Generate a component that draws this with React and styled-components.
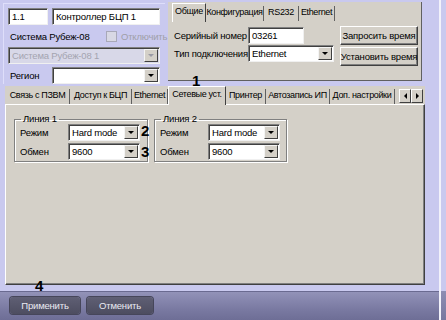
import React from 'react';
import styled, { createGlobalStyle } from 'styled-components';

const Global = createGlobalStyle`
  html, body { margin: 0; padding: 0; background: #c9c9ef; }
  body { font-family: "Liberation Sans", Arial, sans-serif; font-size: 9.5px; letter-spacing: -0.2px; color: #000; }
  * { box-sizing: border-box; }
`;

const Screen = styled.div`
  position: relative;
  width: 446px;
  height: 320px;
  overflow: hidden;
  display: flex;
  background: #c9c9ef;
`;

const MainCol = styled.div`
  width: 439px;
  display: grid;
  grid-template-rows: 86px 199px 6px 29px;
`;

const Edge = styled.div`
  flex: 1;
  border-left: 2px solid #f2f2fa;
  background: linear-gradient(to bottom, #c9c9ef 0 291px, #8d8db3 291px, #77779f 320px);
`;

const Top = styled.div`
  display: flex;
  align-items: flex-start;
  gap: 3px;
  padding: 2px 0 0 3px;
`;

const LeftPanel = styled.div`
  width: 162px;
  height: 81px;
  margin-top: 1px;
  border-top: 1px solid #dedefa;
  border-left: 1px solid #dedefa;
  padding: 4px 4px 0 4px;
  display: flex;
  flex-direction: column;
  gap: 3px;
`;

const Row = styled.div`
  display: flex;
  align-items: center;
  gap: ${p => p.$gap ?? 4}px;
  height: ${p => p.$h ?? 17}px;
`;

const Label = styled.span`
  width: ${p => (p.$w ? p.$w + 'px' : 'auto')};
  color: ${p => (p.$disabled ? '#a0a0a8' : '#000')};
  padding-left: ${p => p.$pl ?? 0}px;
  white-space: nowrap;
  flex-shrink: 0;
`;

const Input = styled.div`
  width: ${p => p.$w}px;
  height: 17px;
  background: #fff;
  border-top: 1px solid #808080;
  border-left: 1px solid #808080;
  border-right: 1px solid #f0f0f0;
  border-bottom: 1px solid #f0f0f0;
  box-shadow: inset 1px 1px 0 #404040;
  padding: 2px 3px 0;
  white-space: nowrap;
  overflow: hidden;
`;

const SelectBox = styled.div`
  width: ${p => p.$w}px;
  height: 17px;
  display: flex;
  background: ${p => (p.$disabled ? '#d8d8e8' : '#fff')};
  border-top: 1px solid #808080;
  border-left: 1px solid #808080;
  border-right: 1px solid #f0f0f0;
  border-bottom: 1px solid #f0f0f0;
  box-shadow: inset 1px 1px 0 #404040;
  color: ${p => (p.$disabled ? '#a4a4b0' : '#000')};
`;

const SelectText = styled.span`
  flex: 1;
  padding: 2px 3px 0;
  white-space: nowrap;
  overflow: hidden;
`;

const ArrowBtn = styled.span`
  width: 14px;
  height: 13px;
  margin: 1px 1px 0 0;
  background: #d4d0c8;
  border-top: 1px solid #f4f4f4;
  border-left: 1px solid #f4f4f4;
  border-right: 1px solid #404040;
  border-bottom: 1px solid #404040;
  display: flex;
  align-items: center;
  justify-content: center;
  &::after {
    content: '';
    border-left: 3px solid transparent;
    border-right: 3px solid transparent;
    border-top: 3px solid ${p => (p.$disabled ? '#9a9aa4' : '#000')};
  }
`;

function Select({ w, value, disabled }) {
  return (
    <SelectBox $w={w} $disabled={disabled}>
      <SelectText>{value}</SelectText>
      <ArrowBtn $disabled={disabled} />
    </SelectBox>
  );
}

const Check = styled.span`
  width: 11px;
  height: 11px;
  background: #d8d8e4;
  border: 1px solid #a8a8b8;
  flex-shrink: 0;
`;

const Panel = styled.div`
  width: 254px;
  height: 79px;
  background: #d4d0c8;
  border-right: 1px solid #606060;
  border-bottom: 1px solid #606060;
  padding: 2px 4px 0 4px;
  display: flex;
  flex-direction: column;
`;

const TabStrip = styled.div`
  display: flex;
  align-items: flex-end;
  height: 17px;
`;

const Tab = styled.div`
  width: ${p => p.$w}px;
  flex-shrink: 0;
  height: 15px;
  padding-top: 1px;
  font-size: 9px;
  letter-spacing: -0.35px;
  text-align: center;
  white-space: nowrap;
  background: #d4d0c8;
  border-right: 1px solid #606060;
  ${p => p.$active && `
    padding-top: 2px;
    border-top: 1px solid #fff;
    border-left: 1px solid #fff;
    border-right: 1px solid #404040;
    position: relative;
    z-index: 1;
    margin-bottom: -1px;
    height: 19px;
  `}
`;

const ScrollArrows = styled.div`
  display: flex;
  margin-left: auto;
  margin-bottom: 1px;
`;

const ScrollBtn = styled.span`
  width: 12px;
  height: 14px;
  background: #d4d0c8;
  border-top: 1px solid #fff;
  border-left: 1px solid #fff;
  border-right: 1px solid #404040;
  border-bottom: 1px solid #404040;
  display: flex;
  align-items: center;
  justify-content: center;
  &::after {
    content: '';
    border-top: 3px solid transparent;
    border-bottom: 3px solid transparent;
    ${p => (p.$dir === 'left' ? 'border-right: 3px solid #000;' : 'border-left: 3px solid #000;')}
  }
`;

const PanelBody = styled.div`
  display: grid;
  grid-template-columns: 1fr 78px;
  column-gap: 6px;
  padding: 4px 0 0 2px;
`;

const FieldCol = styled.div`
  display: flex;
  flex-direction: column;
  gap: 1px;
  padding-top: 2px;
`;

const BtnCol = styled.div`
  display: flex;
  flex-direction: column;
  gap: 2px;
  padding-top: 1px;
`;

const WinButton = styled.div`
  height: 19px;
  background: #d4d0c8;
  border-top: 1px solid #fff;
  border-left: 1px solid #fff;
  border-right: 1px solid #404040;
  border-bottom: 1px solid #404040;
  box-shadow: inset -1px -1px 0 #808080;
  display: flex;
  align-items: center;
  justify-content: center;
  white-space: nowrap;
`;

const Tabs = styled.div`
  margin-left: 5px;
  width: 420px;
  display: flex;
  flex-direction: column;
`;

const TabsHead = styled.div`
  background: #d4d0c8;
  height: 18px;
  display: flex;
  align-items: flex-end;
  padding: 0 2px 0 1px;
`;

const TabsBody = styled.div`
  flex: 1;
  background: #d4d0c8;
  border-top: 1px solid #fff;
  border-left: 1px solid #fff;
  border-right: 1px solid #404040;
  border-bottom: 1px solid #404040;
  box-shadow: inset -1px -1px 0 #808080;
  display: flex;
  align-items: flex-start;
  gap: 1px;
  padding: 9px 0 0 8px;
`;

const Group = styled.fieldset`
  margin: 0;
  width: ${p => p.$w}px;
  height: 48px;
  border: 1px solid #808080;
  box-shadow: 1px 1px 0 #fff, inset 1px 1px 0 #fff;
  padding: 0 6px 0 5px;
  display: flex;
  flex-direction: column;
  gap: 2px;
  & > legend {
    padding: 0 2px;
    margin-left: 1px;
    line-height: 10px;
  }
`;

const GroupRow = styled.div`
  display: flex;
  align-items: center;
  height: 17px;
`;

const Marks = styled.div`
  display: flex;
  flex-direction: column;
  gap: 2px;
  padding-top: 7px;
  margin-left: -8px;
  margin-right: 2px;
  position: relative;
  z-index: 1;
`;

const Mark = styled.span`
  font-weight: bold;
  font-size: 15px;
  letter-spacing: 0;
  line-height: 19px;
  height: 19px;
  width: 10px;
`;

const FloatMark = styled.span`
  position: absolute;
  left: ${p => p.$x}px;
  top: ${p => p.$y}px;
  font-weight: bold;
  font-size: 15px;
  line-height: 14px;
`;

const Bar = styled.div`
  grid-row: 4;
  background: linear-gradient(to bottom, #9292b8, #7a7aa2 60%, #6e6e96);
  border-top: 1px solid #6a6a90;
  display: flex;
  align-items: center;
  gap: 7px;
  padding: 0 0 2px 10px;
`;

const BarButton = styled.div`
  width: ${p => p.$w}px;
  height: 17px;
  border-radius: 3px;
  background: linear-gradient(to bottom, #5f5f74, #4d4d60);
  box-shadow: 0 0 0 1px #46465a;
  color: #eaeaf2;
  display: flex;
  align-items: center;
  justify-content: center;
`;

export default function App() {
  return (
    <Screen>
      <Global />
      <MainCol>
        <Top>
          <LeftPanel>
            <Row $gap={4}>
              <Input $w={40}>1.1</Input>
              <Input $w={108}>Контроллер БЦП 1</Input>
            </Row>
            <Row $h={16}>
              <Label $w={94} $pl={2}>Система Рубеж-08</Label>
              <Check />
              <Label $disabled>Отключить</Label>
            </Row>
            <Row>
              <Select w={152} value="Система Рубеж-08 1" disabled />
            </Row>
            <Row>
              <Label $w={40} $pl={2}>Регион</Label>
              <Select w={108} value="" />
            </Row>
          </LeftPanel>
          <Panel>
            <TabStrip>
              <Tab $w={34} $active>Общие</Tab>
              <Tab $w={58}>Конфигурация</Tab>
              <Tab $w={35}>RS232</Tab>
              <Tab $w={36}>Ethernet</Tab>
            </TabStrip>
            <PanelBody>
              <FieldCol>
                <Row>
                  <Label $w={70}>Серийный номер</Label>
                  <Input $w={56}>03261</Input>
                </Row>
                <Row>
                  <Label $w={70}>Тип подключения</Label>
                  <Select w={86} value="Ethernet" />
                </Row>
              </FieldCol>
              <BtnCol>
                <WinButton>Запросить время</WinButton>
                <WinButton>Установить время</WinButton>
              </BtnCol>
            </PanelBody>
          </Panel>
        </Top>
        <Tabs>
          <TabsHead>
            <Tab $w={64}>Связь с ПЗВМ</Tab>
            <Tab $w={62}>Доступ к БЦП</Tab>
            <Tab $w={36}>Ethernet</Tab>
            <Tab $w={58} $active>Сетевые уст.</Tab>
            <Tab $w={40}>Принтер</Tab>
            <Tab $w={64}>Автозапись ИП</Tab>
            <Tab $w={65}>Доп. настройки</Tab>
            <ScrollArrows>
              <ScrollBtn $dir="left" />
              <ScrollBtn $dir="right" />
            </ScrollArrows>
          </TabsHead>
          <TabsBody>
            <Group $w={134}>
              <legend>Линия 1</legend>
              <GroupRow>
                <Label $w={48}>Режим</Label>
                <Select w={72} value="Hard mode" />
              </GroupRow>
              <GroupRow>
                <Label $w={48}>Обмен</Label>
                <Select w={72} value="9600" />
              </GroupRow>
            </Group>
            <Marks>
              <Mark>2</Mark>
              <Mark>3</Mark>
            </Marks>
            <Group $w={132}>
              <legend>Линия 2</legend>
              <GroupRow>
                <Label $w={48}>Режим</Label>
                <Select w={72} value="Hard mode" />
              </GroupRow>
              <GroupRow>
                <Label $w={48}>Обмен</Label>
                <Select w={72} value="9600" />
              </GroupRow>
            </Group>
          </TabsBody>
        </Tabs>
        <Bar>
          <BarButton $w={70}>Применить</BarButton>
          <BarButton $w={66}>Отменить</BarButton>
        </Bar>
      </MainCol>
      <Edge />
      <FloatMark $x={192} $y={74}>1</FloatMark>
      <FloatMark $x={35} $y={279}>4</FloatMark>
    </Screen>
  );
}
